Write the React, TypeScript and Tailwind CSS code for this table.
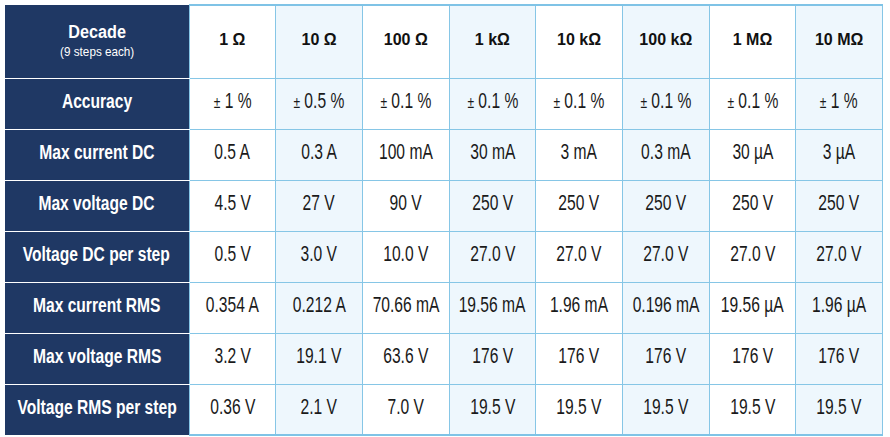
import React from 'react';

const columns = ['1 Ω', '10 Ω', '100 Ω', '1 kΩ', '10 kΩ', '100 kΩ', '1 MΩ', '10 MΩ'];

const rows: { label: string; values: string[] }[] = [
  { label: 'Accuracy', values: ['± 1 %', '± 0.5 %', '± 0.1 %', '± 0.1 %', '± 0.1 %', '± 0.1 %', '± 0.1 %', '± 1 %'] },
  { label: 'Max current DC', values: ['0.5 A', '0.3 A', '100 mA', '30 mA', '3 mA', '0.3 mA', '30 µA', '3 µA'] },
  { label: 'Max voltage DC', values: ['4.5 V', '27 V', '90 V', '250 V', '250 V', '250 V', '250 V', '250 V'] },
  { label: 'Voltage DC per step', values: ['0.5 V', '3.0 V', '10.0 V', '27.0 V', '27.0 V', '27.0 V', '27.0 V', '27.0 V'] },
  { label: 'Max current RMS', values: ['0.354 A', '0.212 A', '70.66 mA', '19.56 mA', '1.96 mA', '0.196 mA', '19.56 µA', '1.96 µA'] },
  { label: 'Max voltage RMS', values: ['3.2 V', '19.1 V', '63.6 V', '176 V', '176 V', '176 V', '176 V', '176 V'] },
  { label: 'Voltage RMS per step', values: ['0.36 V', '2.1 V', '7.0 V', '19.5 V', '19.5 V', '19.5 V', '19.5 V', '19.5 V'] },
];

// the source uses a narrow face; squeeze Liberation Sans to match
const Squeeze: React.FC<{ scale: string; children: React.ReactNode }> = ({ scale, children }) => (
  <div className="flex justify-center">
    <span className={`inline-block whitespace-nowrap ${scale}`}>{children}</span>
  </div>
);

const Value: React.FC<{ text: string }> = ({ text }) => {
  if (text.startsWith('±')) {
    return (
      <>
        <span className="text-[17px]">±</span>
        {text.slice(1)}
      </>
    );
  }
  return <>{text}</>;
};

const App: React.FC = () => {
  return (
    <div className="w-[890px] h-[437px] bg-white pt-[4px] pl-[5px] font-[family-name:'Liberation_Sans',Arial,sans-serif]">
      <table className="table-fixed border-collapse w-[878px]">
        <colgroup>
          <col className="w-[184px]" />
          {columns.map((c) => (
            <col key={c} />
          ))}
        </colgroup>
        <thead>
          <tr className="h-[73px]">
            <th className="bg-[#1f3864] text-white font-bold border-b border-white align-middle p-0">
              <Squeeze scale="scale-x-[0.9]">
                <div className="text-[18px] leading-[22px]">Decade</div>
                <div className="text-[13px] font-normal leading-[18px]">(9 steps each)</div>
              </Squeeze>
            </th>
            {columns.map((c, i) => (
              <th
                key={c}
                className={`${i % 2 === 1 ? 'bg-[#eef7fd]' : 'bg-white'} text-[#111] text-[16px] font-bold border-x border-b border-x-[#86c6e6] border-b-[#86c6e6] border-t-2 border-t-[#7fc3e6] align-middle p-0 pb-[3px]`}
              >
                <Squeeze scale="scale-x-100">{c}</Squeeze>
              </th>
            ))}
          </tr>
        </thead>
        <tbody>
          {rows.map((r, ri) => (
            <tr key={r.label} className="h-[51px]">
              <th
                className={`bg-[#1f3864] text-white text-[20px] font-bold ${ri === rows.length - 1 ? '' : 'border-b border-white'} align-middle p-0 pb-[6px]`}
              >
                <Squeeze scale="scale-x-[0.78]">{r.label}</Squeeze>
              </th>
              {r.values.map((v, i) => (
                <td
                  key={i}
                  className={`${i % 2 === 1 ? 'bg-[#eef7fd]' : 'bg-white'} text-[#1a1a1a] text-[22px] text-center border border-[#86c6e6] ${ri === rows.length - 1 ? 'border-b-2 border-b-[#7fc3e6]' : ''} align-middle p-0 pb-[6px]`}
                >
                  <Squeeze scale="scale-x-[0.71]">
                    <Value text={v} />
                  </Squeeze>
                </td>
              ))}
            </tr>
          ))}
        </tbody>
      </table>
    </div>
  );
};

export default App;
